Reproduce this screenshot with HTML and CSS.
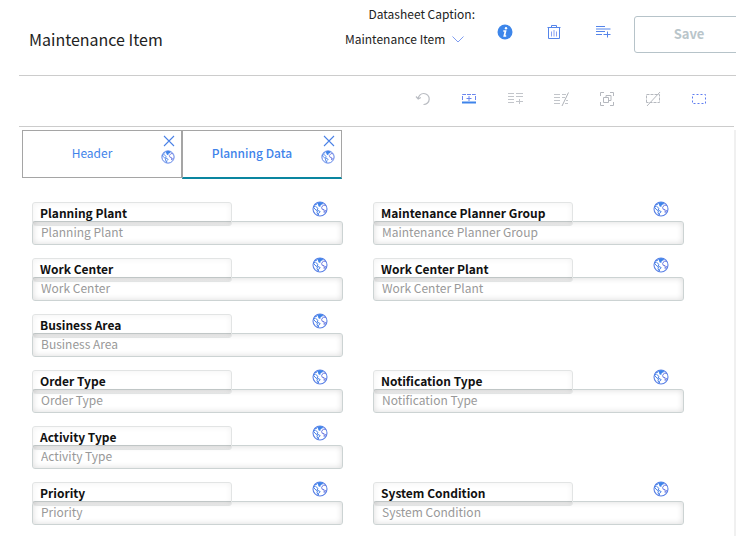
FILE: index.html
```
<!DOCTYPE html>
<html lang="en">
<head>
  <meta charset="UTF-8">
  <title>Maintenance Item</title>
  <meta name="viewport" content="width=device-width, initial-scale=1.0">
  <link rel="stylesheet" href="styles.css">
</head>
<body>
  <!-- Shared icons -->
  <svg class="sprite" aria-hidden="true">
    <symbol id="globe" viewBox="0 0 16 16">
      <circle cx="8" cy="8" r="7" fill="#fff" stroke="#5a80e6" stroke-width="1.1"/>
      <path d="M5 2 8 .9l3 .9-.3 1.500-1.900.6-.6 2L6.500 5.200 6 3.500z" fill="#3f84ea"/>
      <path d="M2.500 3.500 5 3.200M1.300 6l2.200-.8L6 7.500 5.200 9l3 1.600-1.600 1.700-.2 1.900-1.400-2.400.4-1.800L3 8.200z" fill="none" stroke="#4a82e8"/>
      <path d="M13.800 4.500 11.500 4 9.600 6.300l.6 2 1.900.4.100 2.800 1.900-2.500" fill="none" stroke="#6a78e0"/>
    </symbol>
    <symbol id="close" viewBox="0 0 12 12">
      <path d="M1 1l10 10M11 1L1 11" fill="none" stroke="#4a82e6" stroke-width="1.100"/>
    </symbol>
  </svg>

  <header class="page-header">
    <h1 class="title">Maintenance Item</h1>
    <div class="caption">
      <label for="datasheet">Datasheet Caption:</label>
      <div class="caption-select">
        <select id="datasheet"><option>Maintenance Item</option></select>
        <svg class="chevron" viewBox="0 0 12 8"><path d="M.5 1.500 6 7l5.500-5.500" fill="none" stroke="#7f9cf0"/></svg>
      </div>
    </div>
    <div class="header-actions">
      <button class="icon-btn" aria-label="Information">
        <svg viewBox="0 0 16 16">
          <circle cx="8" cy="8" r="7.500" fill="#3d86ea"/>
          <circle cx="9" cy="4.300" r="1.200" fill="#fff"/>
          <path d="M6.300 7h2.200L7.300 12h1.900" fill="none" stroke="#fff" stroke-width="1.700"/>
        </svg>
      </button>
      <button class="icon-btn" aria-label="Delete">
        <svg viewBox="0 0 16 16" fill="none" stroke="#5585ea">
          <path d="M1.500 3.500h13M5.500 3V1.500h5V3M2.500 4v10.500h11V4"/>
          <path d="M5.500 7.500v5M8 6v6.500M10.500 7.500v5" stroke="#8aa2f2"/>
        </svg>
      </button>
      <button class="icon-btn" aria-label="Add row">
        <svg viewBox="0 0 16 16" fill="none" stroke="#5585ea">
          <path d="M1 2.500h9M1 5h14.500M1 7.500h9M1 10.500h6M8.500 10.500h7M12.500 7.500v6"/>
        </svg>
      </button>
    </div>
    <button class="save" disabled>Save</button>
  </header>

  <div class="toolbar">
    <button class="icon-btn" aria-label="Undo">
      <svg viewBox="0 0 16 16" fill="none" stroke="#b9bcc2" stroke-width="1.200">
        <path d="M3.200 8a5.500 5.500 0 1 1 5.300 5.500M1 5.500 3.200 8l2.600-1.500"/>
      </svg>
    </button>
    <button class="icon-btn" aria-label="Insert section">
      <svg viewBox="0 0 16 16" fill="none" stroke="#6a86ee">
        <path d="M1.500 9V3.500h13V9" stroke-dasharray="4 1"/>
        <path d="M5.500 7.500h5M8 5v5"/>
        <path d="M1 11.500h14" stroke="#3f84ea" stroke-width="2"/>
      </svg>
    </button>
    <button class="icon-btn" aria-label="Add field">
      <svg viewBox="0 0 16 16" fill="none" stroke="#c2c5ca">
        <path d="M1 2.500h6M9 2.500h7M1 5.500h6M9 5.500h7M1 8.500h6M1 11.500h6M9 10.500h7M12.500 8v5"/>
      </svg>
    </button>
    <button class="icon-btn" aria-label="Remove field">
      <svg viewBox="0 0 16 16" fill="none" stroke="#c2c5ca">
        <path d="M1 3.500h6M9 3.500h4M1 6.500h6M9 6.500h3M1 9.500h6M1 12.500h6M13 9.500h2M12 12.500h3"/>
        <path d="M15.500 1.500 9 15" stroke="#aeb2b8"/>
      </svg>
    </button>
    <button class="icon-btn" aria-label="Group">
      <svg viewBox="0 0 16 16" fill="none" stroke="#b5b8be">
        <path d="M1.500 5V1.500H5M11 1.500h3.500V5M14.500 11v3.500H11M5 14.500H1.500V11"/>
        <path d="M4.500 6.500h5v5h-5zM7 6V4.500h5v5h-2"/>
      </svg>
    </button>
    <button class="icon-btn" aria-label="Remove section">
      <svg viewBox="0 0 16 16" fill="none" stroke="#b5b8be">
        <path d="M1.500 11.500v-8h13v8h-13" stroke-dasharray="3 1"/>
        <path d="M15 1 2 15"/>
      </svg>
    </button>
    <button class="icon-btn" aria-label="Select area">
      <svg viewBox="0 0 16 16" fill="none" stroke="#5f7df0">
        <path d="M1.500 3.500h13v9h-13z" stroke-dasharray="2 2"/>
      </svg>
    </button>
  </div>

  <main class="sheet">
    <nav class="tabs">
      <div class="tab">
        <button class="tab-name">Header</button>
        <div class="tab-tools">
          <button class="icon-btn close" aria-label="Close Header"><svg><use href="#close"/></svg></button>
          <button class="icon-btn globe-sm" aria-label="Translate Header"><svg><use href="#globe"/></svg></button>
        </div>
      </div>
      <div class="tab active">
        <button class="tab-name">Planning Data</button>
        <div class="tab-tools">
          <button class="icon-btn close" aria-label="Close Planning Data"><svg><use href="#close"/></svg></button>
          <button class="icon-btn globe-sm" aria-label="Translate Planning Data"><svg><use href="#globe"/></svg></button>
        </div>
      </div>
    </nav>

    <form class="fields">
      <div class="field">
        <div class="field-top">
          <label for="planning-plant">Planning Plant</label>
          <button type="button" class="icon-btn" aria-label="Translate"><svg><use href="#globe"/></svg></button>
        </div>
        <input id="planning-plant" type="text" placeholder="Planning Plant">
      </div>
      <div class="field">
        <div class="field-top">
          <label for="planner-group">Maintenance Planner Group</label>
          <button type="button" class="icon-btn" aria-label="Translate"><svg><use href="#globe"/></svg></button>
        </div>
        <input id="planner-group" type="text" placeholder="Maintenance Planner Group">
      </div>
      <div class="field">
        <div class="field-top">
          <label for="work-center">Work Center</label>
          <button type="button" class="icon-btn" aria-label="Translate"><svg><use href="#globe"/></svg></button>
        </div>
        <input id="work-center" type="text" placeholder="Work Center">
      </div>
      <div class="field">
        <div class="field-top">
          <label for="work-center-plant">Work Center Plant</label>
          <button type="button" class="icon-btn" aria-label="Translate"><svg><use href="#globe"/></svg></button>
        </div>
        <input id="work-center-plant" type="text" placeholder="Work Center Plant">
      </div>
      <div class="field">
        <div class="field-top">
          <label for="business-area">Business Area</label>
          <button type="button" class="icon-btn" aria-label="Translate"><svg><use href="#globe"/></svg></button>
        </div>
        <input id="business-area" type="text" placeholder="Business Area">
      </div>
      <div class="field first">
        <div class="field-top">
          <label for="order-type">Order Type</label>
          <button type="button" class="icon-btn" aria-label="Translate"><svg><use href="#globe"/></svg></button>
        </div>
        <input id="order-type" type="text" placeholder="Order Type">
      </div>
      <div class="field">
        <div class="field-top">
          <label for="notification-type">Notification Type</label>
          <button type="button" class="icon-btn" aria-label="Translate"><svg><use href="#globe"/></svg></button>
        </div>
        <input id="notification-type" type="text" placeholder="Notification Type">
      </div>
      <div class="field">
        <div class="field-top">
          <label for="activity-type">Activity Type</label>
          <button type="button" class="icon-btn" aria-label="Translate"><svg><use href="#globe"/></svg></button>
        </div>
        <input id="activity-type" type="text" placeholder="Activity Type">
      </div>
      <div class="field first">
        <div class="field-top">
          <label for="priority">Priority</label>
          <button type="button" class="icon-btn" aria-label="Translate"><svg><use href="#globe"/></svg></button>
        </div>
        <input id="priority" type="text" placeholder="Priority">
      </div>
      <div class="field">
        <div class="field-top">
          <label for="system-condition">System Condition</label>
          <button type="button" class="icon-btn" aria-label="Translate"><svg><use href="#globe"/></svg></button>
        </div>
        <input id="system-condition" type="text" placeholder="System Condition">
      </div>
    </form>
  </main>
</body>
</html>
```
FILE: styles.css
```
* {
  box-sizing: border-box;
}

body {
  margin: 0;
  min-height: 100vh;
  padding-left: 19px;
  display: flex;
  flex-direction: column;
  background: #fff;
  color: #222;
  font-family: "Noto Sans CJK SC", "Noto Sans", sans-serif;
  font-size: 12px;
  line-height: 16px;
  overflow-x: hidden;
}

button,
select,
input {
  font: inherit;
}

.sprite {
  display: none;
}

.icon-btn {
  width: 16px;
  height: 16px;
  padding: 0;
  border: 0;
  background: none;
  flex: none;
}
.icon-btn svg {
  display: block;
  width: 100%;
  height: 100%;
}

/* Title bar */
.page-header {
  display: flex;
  align-items: flex-start;
  height: 76px;
  padding-left: 10px;
  border-bottom: 1px solid #ccc;
}
.title {
  margin: 27px auto 0 0;
  font-size: 16px;
  line-height: 24px;
  font-weight: 400;
}

.caption {
  display: flex;
  flex-direction: column;
  align-items: flex-end;
  gap: 9px;
  padding-top: 6px;
}
.caption-select {
  display: flex;
  align-items: center;
  gap: 6px;
  padding-right: 11px;
}
.caption-select select {
  appearance: none;
  padding: 0;
  border: 0;
  background: none;
  color: #222;
}
.chevron {
  width: 12px;
  height: 8px;
}

.header-actions {
  display: flex;
  gap: 33px;
  padding: 24px 23px 0 22px;
}

/* runs past the right edge of the window */
.save {
  width: 110px;
  height: 37px;
  margin: 16px -8px 0 0;
  padding: 0 0 2px;
  border: 1px solid #b6c3c9;
  border-radius: 3px;
  background: #fff;
  color: #b9c5ca;
  font-size: 13px;
  font-weight: 700;
}

.toolbar {
  display: flex;
  justify-content: flex-end;
  align-items: center;
  gap: 30px;
  height: 51px;
  margin-right: 2px;
  padding: 0 27px 4px 0;
  border-bottom: 1px solid #ccc;
}

.sheet {
  flex: 1;
  margin-top: 3px;
  padding-left: 3px;
  border-right: 2px solid #f0f0f0;
}

/* Tabs */
.tabs {
  display: flex;
}
.tab {
  display: flex;
  width: 160px;
  height: 48px;
  border: 1px solid #a5a5a5;
}
.tab.active {
  height: 49px;
  border-bottom: 2px solid #0a86a0;
}
.tab-name {
  flex: 1;
  padding: 0 0 2px;
  border: 0;
  background: none;
  color: #3f84ea;
}
.tab.active .tab-name {
  font-weight: 500;
}
.tab-tools {
  display: flex;
  flex-direction: column;
  align-items: flex-start;
  gap: 3px;
  width: 20px;
  padding-top: 4px;
}
.close {
  width: 12px;
  height: 12px;
  margin-left: 2px;
}
.globe-sm {
  width: 14px;
  height: 14px;
}

/* Field grid */
.fields {
  display: grid;
  grid-template-columns: repeat(2, minmax(0, 311px));
  gap: 13px 30px;
  padding: 23px 0 10px 10px;
}
.first {
  grid-column: 1;
}
.field-top {
  display: flex;
  justify-content: space-between;
  padding-right: 15px;
}
.field-top .icon-btn {
  margin-top: -1px;
}
.field-top label {
  position: relative;
  width: 200px;
  height: 24px;
  padding: 2px 7px;
  border: 1px solid #e2e4e4;
  border-radius: 3px;
  background: linear-gradient(to top, rgba(0, 0, 0, 0.05) 4px, transparent 4px);
  box-shadow: inset 0 0 6px rgba(0, 0, 0, 0.06);
  color: #111;
  font-weight: 700;
  white-space: nowrap;
}
.field input {
  display: block;
  width: 100%;
  height: 24px;
  margin-top: -5px;
  padding: 0 8px 4px;
  border: 1px solid #ccd3d3;
  border-radius: 3px;
  background: #fff;
  box-shadow: inset 0 0 6px rgba(0, 0, 0, 0.15);
  color: #222;
}
.field input::placeholder {
  color: #999;
  opacity: 1;
}
```
